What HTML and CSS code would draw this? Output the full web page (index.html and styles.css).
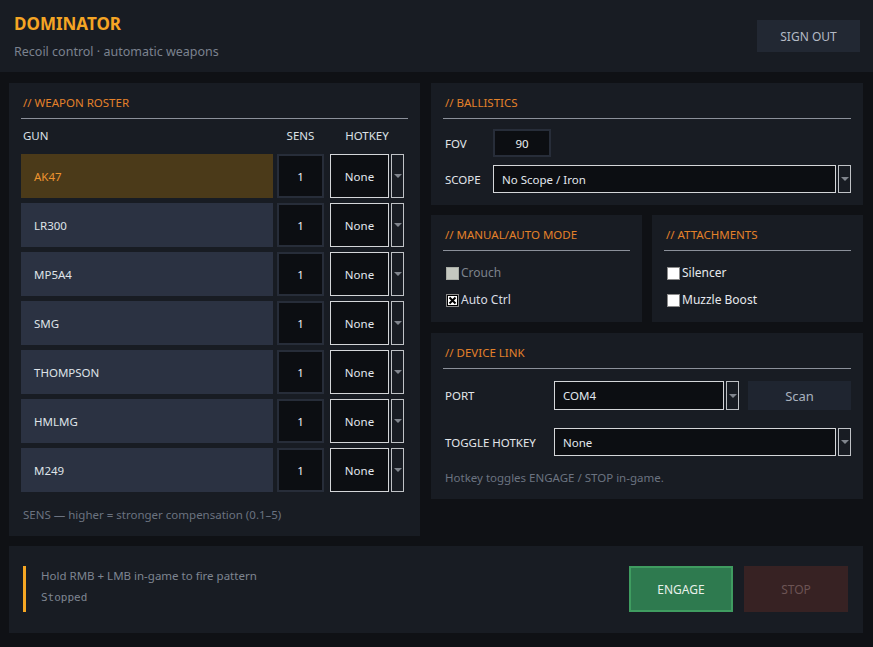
FILE: index.html
```html
<!DOCTYPE html>
<html lang="en">
<head>
  <meta charset="UTF-8" />
  <meta name="viewport" content="width=device-width, initial-scale=1.0"/>
  <title>Dominator</title>
  <link rel="stylesheet" href="styles.css">
</head>
<body>
  <header class="topbar">
    <div class="brand">
      <div class="brand-title">DOMINATOR</div>
      <div class="brand-sub">Recoil control · automatic weapons</div>
    </div>
    <button class="btn-signout">SIGN OUT</button>
  </header>

  <main class="layout">
    <!-- weapon list -->
    <section class="panel roster">
      <div class="panel-title">// WEAPON ROSTER</div>
      <div class="roster-head">
        <span class="col-gun">GUN</span>
        <span class="col-sens">SENS</span>
        <span class="col-key">HOTKEY</span>
      </div>
      <div class="roster-rows">
        <div class="row">
          <div class="gun active">AK47</div>
          <div class="num">1</div>
          <div class="select"><div class="select-box center">None</div><div class="select-arrow"><i></i></div></div>
        </div>
        <div class="row">
          <div class="gun">LR300</div>
          <div class="num">1</div>
          <div class="select"><div class="select-box center">None</div><div class="select-arrow"><i></i></div></div>
        </div>
        <div class="row">
          <div class="gun">MP5A4</div>
          <div class="num">1</div>
          <div class="select"><div class="select-box center">None</div><div class="select-arrow"><i></i></div></div>
        </div>
        <div class="row">
          <div class="gun">SMG</div>
          <div class="num">1</div>
          <div class="select"><div class="select-box center">None</div><div class="select-arrow"><i></i></div></div>
        </div>
        <div class="row">
          <div class="gun">THOMPSON</div>
          <div class="num">1</div>
          <div class="select"><div class="select-box center">None</div><div class="select-arrow"><i></i></div></div>
        </div>
        <div class="row">
          <div class="gun">HMLMG</div>
          <div class="num">1</div>
          <div class="select"><div class="select-box center">None</div><div class="select-arrow"><i></i></div></div>
        </div>
        <div class="row">
          <div class="gun">M249</div>
          <div class="num">1</div>
          <div class="select"><div class="select-box center">None</div><div class="select-arrow"><i></i></div></div>
        </div>
      </div>
      <div class="hint">SENS — higher = stronger compensation (0.1–5)</div>
    </section>

    <div class="side">
      <section class="panel ballistics">
        <div class="panel-title">// BALLISTICS</div>
        <div class="form-grid">
          <span class="field-label">FOV</span>
          <div><div class="num fov">90</div></div>
          <span class="field-label">SCOPE</span>
          <div class="select"><div class="select-box">No Scope / Iron</div><div class="select-arrow"><i></i></div></div>
        </div>
      </section>

      <div class="pair">
        <section class="panel checks">
          <div class="panel-title">// MANUAL/AUTO MODE</div>
          <div class="check-list">
            <label class="check disabled"><span class="box box-off"></span>Crouch</label>
            <label class="check">
              <svg class="box-svg" width="13" height="13" viewBox="0 0 13 13">
                <rect x="0.5" y="0.5" width="12" height="12" fill="#fff" stroke="#8a8a8a"/>
                <rect x="1.5" y="1.5" width="10" height="10" fill="none" stroke="#000"/>
                <path d="M3.5 3.5 L9.5 9.5 M9.5 3.5 L3.5 9.5" stroke="#000" stroke-width="2"/>
              </svg>Auto Ctrl</label>
          </div>
        </section>
        <section class="panel checks">
          <div class="panel-title">// ATTACHMENTS</div>
          <div class="check-list">
            <label class="check bright"><span class="box"></span>Silencer</label>
            <label class="check bright"><span class="box"></span>Muzzle Boost</label>
          </div>
        </section>
      </div>

      <section class="panel device">
        <div class="panel-title">// DEVICE LINK</div>
        <div class="dev-row port-row">
          <span class="field-label dev-label">PORT</span>
          <div class="select port-select"><div class="select-box">COM4</div><div class="select-arrow"><i></i></div></div>
          <button class="btn-scan">Scan</button>
        </div>
        <div class="dev-row key-row">
          <span class="field-label dev-label">TOGGLE HOTKEY</span>
          <div class="select"><div class="select-box">None</div><div class="select-arrow"><i></i></div></div>
        </div>
        <div class="hint dev-hint">Hotkey toggles ENGAGE / STOP in-game.</div>
      </section>
    </div>
  </main>

  <footer class="statusbar">
    <div class="status-info">
      <div class="status-line">Hold RMB + LMB in-game to fire pattern</div>
      <div class="status-state">Stopped</div>
    </div>
    <button class="btn-engage">ENGAGE</button>
    <button class="btn-stop">STOP</button>
  </footer>
</body>
</html>
```

FILE: styles.css
```css
body {
  margin: 0;
  background: #0f1115;
  font-family: 'Noto Sans', 'Open Sans', sans-serif;
  font-size: 11.5px;
  color: #dfe3e8;
}

button {
  font-family: inherit;
  font-size: 12px;
  border: none;
  cursor: pointer;
}

/* header */
.topbar {
  height: 72px;
  box-sizing: border-box;
  background: #181c23;
  display: flex;
  justify-content: space-between;
  align-items: flex-start;
  padding: 14px 13px 0 14px;
}

.brand-title {
  color: #f5a524;
  font-size: 17px;
  font-weight: bold;
  line-height: 20px;
}

.brand-sub {
  color: #7b828f;
  font-size: 12.5px;
  line-height: 16px;
  margin-top: 10px;
}

.btn-signout {
  margin-top: 6px;
  width: 103px;
  height: 32px;
  background: #222833;
  color: #b4bac5;
}

/* main grid */
.layout {
  display: grid;
  grid-template-columns: 411px 432px;
  column-gap: 11px;
  align-items: start;
  padding: 11px 10px 0 9px;
}

.panel {
  background: #181c23;
  padding: 11px 12px 12px;
}

.panel-title {
  color: #e3812a;
  line-height: 17px;
  padding: 0 2px 7px;
  border-bottom: 1px solid #8b909a;
}

/* roster */
.roster {
  padding-bottom: 13px;
}

.roster-head {
  display: grid;
  grid-template-columns: 252px 47px 76px;
  column-gap: 4px;
  margin-top: 9px;
  line-height: 16px;
  color: #dce1e6;
}

.col-gun {
  padding-left: 2px;
}

.col-sens, .col-key {
  text-align: center;
}

.col-key {
  padding-left: 2px;
}

.roster-rows {
  display: flex;
  flex-direction: column;
  gap: 5px;
  margin-top: 10px;
}

.row {
  display: grid;
  grid-template-columns: 252px 47px 76px;
  column-gap: 4px;
  height: 44px;
}

.row .select {
  margin-left: 2px;
}

.gun {
  background: #2b3242;
  color: #dfe3e8;
  padding: 1px 0 0 13px;
  display: flex;
  align-items: center;
}

.gun.active {
  background: #4b3a19;
  color: #ec9430;
}

.num {
  background: #0c0e12;
  border: 2px solid #272d39;
  color: #eef1f4;
  padding-top: 1px;
  display: flex;
  align-items: center;
  justify-content: center;
}

.select {
  display: flex;
  gap: 2px;
}

.select-box {
  flex: 1;
  background: #0c0e12;
  border: 1px solid #d4d6d9;
  color: #e2e8ef;
  display: flex;
  align-items: center;
  padding-left: 8px;
}

.select-box.center {
  justify-content: center;
  padding: 1px 0 0;
}

.select-arrow {
  width: 11px;
  border: 1px solid #bfc2c6;
  display: flex;
  align-items: center;
  justify-content: center;
}

.select-arrow i {
  width: 0;
  height: 0;
  border-left: 4px solid transparent;
  border-right: 4px solid transparent;
  border-top: 4px solid #80858d;
}

.hint {
  color: #6b7380;
  line-height: 16px;
  margin-top: 15px;
  padding-left: 2px;
}

/* right column */
.side {
  display: flex;
  flex-direction: column;
  gap: 10px;
}

.form-grid {
  display: grid;
  grid-template-columns: 50px 1fr;
  grid-template-rows: 28px 28px;
  row-gap: 8px;
  margin-top: 10px;
  align-items: stretch;
}

.field-label {
  color: #e2e6ea;
  padding-left: 2px;
  display: flex;
  align-items: center;
}

.fov {
  width: 54px;
  height: 24px;
  padding-top: 0;
}

.pair {
  display: grid;
  grid-template-columns: 1fr 1fr;
  column-gap: 10px;
}

.checks {
  padding-bottom: 14px;
}

.check-list {
  display: flex;
  flex-direction: column;
  gap: 11px;
  margin-top: 14px;
}

.check {
  display: flex;
  align-items: center;
  line-height: 16px;
  padding-left: 3px;
  gap: 2px;
  color: #d8dde3;
  font-size: 12px;
}

.check.disabled {
  color: #7d838c;
}

.check.bright {
  color: #e6e9ed;
}

.box {
  width: 11px;
  height: 11px;
  background: #fff;
  border: 1px solid #8a8a8a;
}

.box-off {
  background: #c4c8c0;
  border-color: #a9ada6;
}

.device {
  margin-top: 1px;
  padding-bottom: 13px;
}

.dev-row {
  display: flex;
}

.port-row {
  height: 29px;
  margin-top: 12px;
}

.key-row {
  height: 28px;
  margin-top: 18px;
}

.dev-row .select {
  flex: 1;
}

.dev-label {
  width: 109px;
}

.btn-scan {
  width: 103px;
  margin-left: 9px;
  background: #1f2530;
  color: #a9b2bf;
  font-size: 13px;
}

.dev-hint {
  margin-top: 14px;
}

/* bottom bar */
.statusbar {
  margin: 10px 10px 0 9px;
  height: 87px;
  box-sizing: border-box;
  background: #181c23;
  display: flex;
  align-items: center;
  padding: 0 15px 1px 14px;
}

.status-info {
  flex: 1;
  height: 46px;
  box-sizing: border-box;
  border-left: 3px solid #f5a623;
  padding: 2px 0 0 15px;
  color: #7e8591;
}

.status-line {
  line-height: 16px;
}

.status-state {
  font-family: 'DejaVu Sans Mono', monospace;
  font-size: 11px;
  line-height: 16px;
  margin-top: 6px;
}

.btn-engage {
  width: 104px;
  height: 46px;
  background: #2e7a4f;
  border: 2px solid #3f9c60;
  color: #e8f0ea;
}

.btn-stop {
  width: 104px;
  height: 46px;
  margin-left: 11px;
  background: #372223;
  color: #6c5454;
}
```
